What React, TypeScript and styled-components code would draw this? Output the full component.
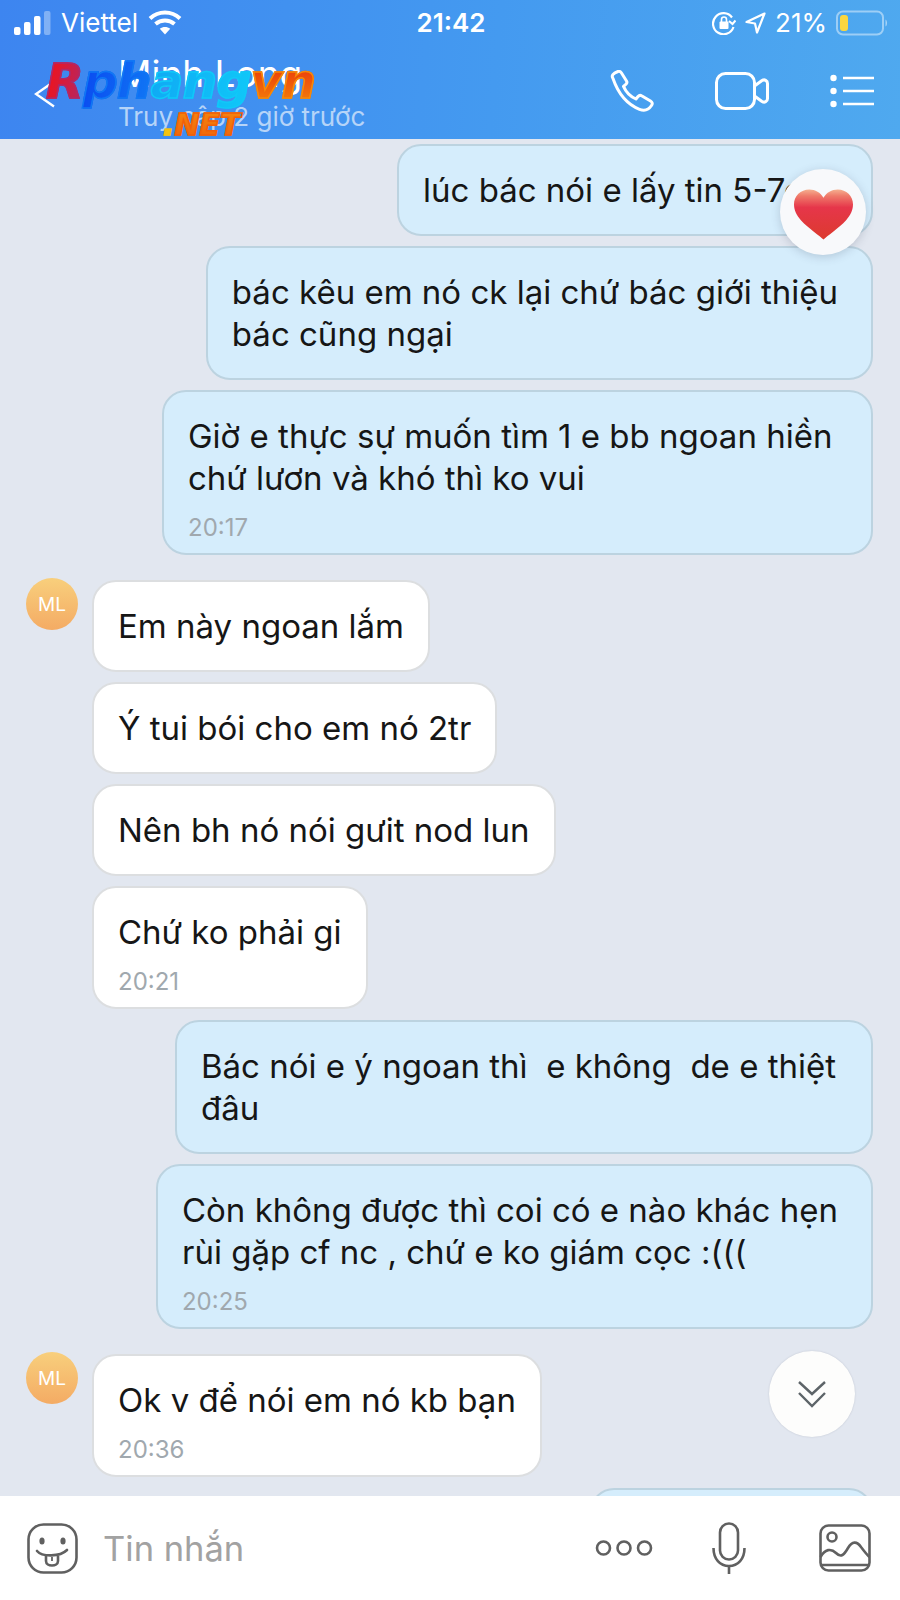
import styled, { createGlobalStyle } from "styled-components";

const GlobalStyle = createGlobalStyle`
  html, body {
    margin: 0;
    padding: 0;
    background: #e2e7f0;
  }
  * {
    box-sizing: border-box;
  }
`;

const Screen = styled.div`
  position: relative;
  display: flex;
  flex-direction: column;
  width: 900px;
  height: 1600px;
  overflow: hidden;
  font-family: Inter, "Noto Sans", sans-serif;
  color: #161616;
`;

const TopBar = styled.header`
  flex: none;
  height: 139px;
  color: #fff;
  background: linear-gradient(95deg, #3d85f0 0%, #449af0 55%, #4fa9ef 100%);
`;

const StatusBar = styled.div`
  display: grid;
  grid-template-columns: 1fr auto 1fr;
  align-items: center;
  height: 45px;
  padding: 0 12px 0 14px;
`;

const StatusSide = styled.div<{ $end?: boolean }>`
  display: flex;
  align-items: center;
  justify-content: ${(p) => (p.$end ? "flex-end" : "flex-start")};
  gap: ${(p) => (p.$end ? "9px" : "10px")};
  font-size: 26px;
`;

const Clock = styled.div`
  font-size: 26px;
  font-weight: 600;
`;

const NavBar = styled.div`
  display: flex;
  align-items: center;
  height: 94px;
  padding: 0 26px 2px 34px;
`;

const BackIcon = styled.svg`
  flex: none;
  width: 22px;
  height: 28px;
  margin-top: 6px;
`;

const Contact = styled.div`
  flex: 1;
  margin: 5px 0 0 62px;
`;

const ContactName = styled.div`
  margin-bottom: 6px;
  font-size: 37px;
  line-height: 40px;
`;

const LastSeen = styled.div`
  font-size: 26px;
  line-height: 34px;
  color: #b6d4f8;
`;

const NavActions = styled.div`
  display: flex;
  align-items: center;
  gap: 61px;
`;

const Messages = styled.main`
  flex: 1;
  min-height: 0;
  overflow: hidden;
  display: flex;
  flex-direction: column;
  padding: 5px 27px 0 26px;
`;

const OutGroup = styled.div`
  display: flex;
  flex-direction: column;
  align-items: flex-end;
  gap: 10px;
  margin-bottom: 25px;

  &:last-child {
    margin-bottom: 0;
  }
`;

const InGroup = styled.div`
  display: flex;
  gap: 14px;
  margin-bottom: 11px;
`;

const Avatar = styled.div`
  flex: none;
  display: flex;
  align-items: center;
  justify-content: center;
  width: 52px;
  height: 52px;
  margin-top: -2px;
  border-radius: 50%;
  font-size: 19px;
  color: #fff;
  background: linear-gradient(180deg, #f8cf7c 0%, #f4ab64 100%);
`;

const InStack = styled.div`
  display: flex;
  flex-direction: column;
  align-items: flex-start;
  gap: 10px;
`;

const Bubble = styled.div<{ $out?: boolean; $minWidth?: number }>`
  min-width: ${(p) => p.$minWidth ?? 0}px;
  min-height: 92px;
  padding: 23px ${(p) => (p.$out ? "33px" : "24px")} 23px 24px;
  border-radius: 24px;
  border: 2px solid ${(p) => (p.$out ? "#bcd3e0" : "#dcdee0")};
  background: ${(p) => (p.$out ? "#d5edfc" : "#ffffff")};
  font-size: 33px;
  line-height: 42px;
  white-space: pre;
`;

const Time = styled.div`
  margin-top: 17px;
  margin-bottom: -10px;
  font-size: 24px;
  line-height: 24px;
  color: #a0a8ae;
`;

const Composer = styled.footer`
  flex: none;
  display: flex;
  align-items: center;
  height: 104px;
  padding: 0 29px 0 27px;
  background: #fff;
`;

const Placeholder = styled.div`
  flex: 1;
  margin-left: 25px;
  font-size: 34.500px;
  color: #a2a2a2;
`;

const ComposerActions = styled.div`
  display: flex;
  align-items: center;
`;

const ReactionBadge = styled.div`
  position: absolute;
  top: 169px;
  left: 780px;
  display: flex;
  align-items: center;
  justify-content: center;
  width: 86px;
  height: 86px;
  padding-top: 4px;
  border-radius: 50%;
  background: #f8f9fb;
  box-shadow: 0 2px 10px rgba(60, 70, 90, 0.22);
`;

const ScrollButton = styled.div`
  position: absolute;
  top: 1351px;
  left: 769px;
  display: flex;
  align-items: center;
  justify-content: center;
  width: 86px;
  height: 86px;
  border-radius: 50%;
  background: #fdfdfc;
  box-shadow: 0 0 2px rgba(60, 70, 90, 0.2);
`;

const Watermark = styled.div`
  position: absolute;
  top: 57px;
  left: 46px;
  font-family: "DejaVu Sans", Verdana, sans-serif;
  font-weight: 700;
  font-style: italic;
  line-height: 1;
  white-space: nowrap;
`;

const MarkLine = styled.div`
  font-size: 48px;
  letter-spacing: -1px;
  transform: scaleX(1.02);
  transform-origin: left center;
`;

const MarkPart = styled.span<{ $from: string; $to: string; $angle?: number }>`
  background: linear-gradient(${(p) => p.$angle ?? 180}deg, ${(p) => p.$from}, ${(p) => p.$to});
  -webkit-background-clip: text;
  background-clip: text;
  color: transparent;
  -webkit-text-stroke: 1.500px ${(p) => p.$to};
`;

const MarkNet = styled.div`
  margin: 5px 0 0 117px;
  font-size: 30px;
`;

const SignalIcon = () => (
  <svg width="37" height="24" viewBox="0 0 37 24">
    <rect x="0" y="16" width="6.500" height="8" rx="2" fill="#fff" />
    <rect x="10" y="11" width="6.500" height="13" rx="2" fill="#fff" />
    <rect x="20" y="5" width="6.500" height="19" rx="2" fill="#fff" />
    <rect x="30" y="0" width="6.500" height="24" rx="2" fill="#fff" fillOpacity="0.35" />
  </svg>
);

const WifiIcon = () => (
  <svg width="34" height="25" viewBox="0 0 34 25" fill="none" stroke="#fff" strokeWidth="4">
    <path d="M2 8.500C10.500 0.500 23.500 0.500 32 8.500" />
    <path d="M7.500 14C13 9.300 21 9.300 26.500 14" />
    <path d="M17 24.500L11.800 18.800C14.800 16.500 19.200 16.500 22.200 18.800Z" fill="#fff" stroke="none" />
  </svg>
);

const RotationLockIcon = () => (
  <svg width="24" height="24" viewBox="0 0 24 24" fill="none" stroke="#fff" strokeWidth="2.200">
    <path d="M20 6.500A10.500 10.500 0 1 0 21.500 16" />
    <path d="M23.500 9.500L20.500 13L17 10" strokeWidth="2" />
    <rect x="7.500" y="10.500" width="9" height="7.500" rx="1" fill="#fff" stroke="none" />
    <path d="M9.500 11V8.500a2.500 2.500 0 0 1 5 0V11" strokeWidth="1.600" />
  </svg>
);

const LocationIcon = () => (
  <svg width="21" height="22" viewBox="0 0 21 22" fill="none" stroke="#fff" strokeWidth="2.200" strokeLinejoin="round">
    <path d="M19.500 1.500L1.500 10L10 11.500L12 20.500Z" />
  </svg>
);

const BatteryIcon = () => (
  <svg width="52" height="26" viewBox="0 0 52 26" fill="none">
    <rect x="1" y="1.500" width="46" height="23" rx="6" stroke="#fff" strokeOpacity="0.45" strokeWidth="2" />
    <rect x="4" y="5" width="8" height="16" rx="3" fill="#fbd63e" />
    <path d="M49.500 9.500C51.500 10.500 51.500 15.500 49.500 16.500Z" fill="#fff" fillOpacity="0.5" />
  </svg>
);

const PhoneIcon = () => (
  <svg width="44" height="42" viewBox="0 0 44 42" fill="none" stroke="#fff" strokeWidth="3" strokeLinejoin="round">
    <path d="M3 8.500C1 5.500 3 3.500 8 1.500C9.500 1 10.500 1.500 11.500 3L16.500 11C17.300 12.300 17 13.300 15.800 14.300L13.500 16.300C15.500 21 20.500 26.500 26 29L28 26.500C29.200 25.200 30.300 25 31.600 25.800L40.500 31C42.500 32.300 42.700 33.700 41.500 35.500C38.500 40 34 41 29.500 39.300C17.500 34.500 8.500 24.500 3 8.500Z" />
  </svg>
);

const VideoIcon = () => (
  <svg width="54" height="38" viewBox="0 0 54 38" fill="none" stroke="#fff" strokeWidth="3" strokeLinejoin="round">
    <rect x="1.500" y="1.500" width="38" height="35" rx="9" />
    <path d="M39.500 14L47 8.500C49.500 7 52.500 8.500 52.500 11.500V26.500C52.500 29.500 49.500 31 47 29.500L39.500 24" />
  </svg>
);

const ListIcon = () => (
  <svg width="44" height="34" viewBox="0 0 44 34" fill="none">
    <circle cx="3.500" cy="4" r="3.200" fill="#fff" />
    <circle cx="3.500" cy="17" r="3.200" fill="#fff" />
    <circle cx="3.500" cy="30" r="3.200" fill="#fff" />
    <path d="M13 4H44M13 17H44M13 30H44" stroke="#fff" strokeWidth="2.600" />
  </svg>
);

const HeartIcon = () => (
  <svg width="59" height="51" viewBox="0 0 58 52" preserveAspectRatio="none">
    <defs>
      <linearGradient id="heartFill" x1="0" y1="0" x2="0" y2="1">
        <stop offset="0" stopColor="#f5b090" />
        <stop offset="0.13" stopColor="#ef7a6a" />
        <stop offset="0.36" stopColor="#e6364a" />
        <stop offset="1" stopColor="#dc3a2e" />
      </linearGradient>
    </defs>
    <path
      d="M29 51.500C26 48 14 40 7 32C2 26 0 21 0 15.500C0 7 6.500 0.500 15 0.500C21 0.500 26 3.500 29 9C32 3.500 37 0.500 43 0.500C51.500 0.500 58 7 58 15.500C58 21 56 26 51 32C44 40 32 48 29 51.500Z"
      fill="url(#heartFill)"
    />
  </svg>
);

const ChevronsIcon = () => (
  <svg width="30" height="28" viewBox="0 0 30 28" fill="none" stroke="#5d6468" strokeWidth="2.400">
    <path d="M2 2L15 14L28 2" />
    <path d="M2 13L15 26L28 13" />
  </svg>
);

const FaceIcon = () => (
  <svg width="51" height="51" viewBox="0 0 51 51" fill="none" stroke="#606060" strokeWidth="2.600">
    <rect x="1.500" y="1.500" width="48" height="48" rx="15" />
    <ellipse cx="15" cy="18" rx="2.600" ry="3.600" fill="#606060" stroke="none" />
    <ellipse cx="36" cy="18" rx="2.600" ry="3.600" fill="#606060" stroke="none" />
    <path d="M10 28C15 34 33 34 40 27" strokeLinecap="round" />
    <path d="M19 33V38C19 44 31 44 31 38V32.500" />
    <path d="M25 34V38" strokeWidth="1.800" />
  </svg>
);

const DotsIcon = styled.svg`
  margin-right: 59px;
`;

const MicIcon = styled.svg`
  margin-right: 73px;
`;

const ImageIcon = () => (
  <svg width="52" height="48" viewBox="0 0 52 48" fill="none" stroke="#606060" strokeWidth="2.600">
    <rect x="1.500" y="1.500" width="49" height="45" rx="8" />
    <circle cx="13" cy="13" r="4.500" />
    <path d="M1.500 33C6 25 12 24 17 29C22 34 25 31 29 24C33 17 38 17 42 23C45 27 48 31 50.500 33" />
    <path d="M2 41H50" />
  </svg>
);

function App() {
  return (
    <>
      <GlobalStyle />
      <Screen>
        <TopBar>
          <StatusBar>
            <StatusSide>
              <SignalIcon />
              <span>Viettel</span>
              <WifiIcon />
            </StatusSide>
            <Clock>21:42</Clock>
            <StatusSide $end>
              <RotationLockIcon />
              <LocationIcon />
              <span>21%</span>
              <BatteryIcon />
            </StatusSide>
          </StatusBar>
          <NavBar>
            <BackIcon viewBox="0 0 22 28" fill="none" stroke="#fff" strokeWidth="2.400">
              <path d="M20 1.500L2 14L20 26.500" />
            </BackIcon>
            <Contact>
              <ContactName>Minh Long</ContactName>
              <LastSeen>Truy cập 2 giờ trước</LastSeen>
            </Contact>
            <NavActions>
              <PhoneIcon />
              <VideoIcon />
              <ListIcon />
            </NavActions>
          </NavBar>
        </TopBar>

        <Messages>
          <OutGroup>
            <Bubble $out $minWidth={476}>lúc bác nói e lấy tin 5-7củ</Bubble>
            <Bubble $out>{"bác kêu em nó ck lại chứ bác giới thiệu\nbác cũng ngại"}</Bubble>
            <Bubble $out $minWidth={711}>
              {"Giờ e thực sự muốn tìm 1 e bb ngoan hiền\nchứ lươn và khó thì ko vui"}
              <Time>20:17</Time>
            </Bubble>
          </OutGroup>
          <InGroup>
            <Avatar>ML</Avatar>
            <InStack>
              <Bubble>Em này ngoan lắm</Bubble>
              <Bubble>Ý tui bói cho em nó 2tr</Bubble>
              <Bubble>Nên bh nó nói gưit nod lun</Bubble>
              <Bubble>
                Chứ ko phải gi
                <Time>20:21</Time>
              </Bubble>
            </InStack>
          </InGroup>
          <OutGroup>
            <Bubble $out $minWidth={698}>{"Bác nói e ý ngoan thì  e không  de e thiệt\nđâu"}</Bubble>
            <Bubble $out>
              {"Còn không được thì coi có e nào khác hẹn\nrùi gặp cf nc , chứ e ko giám cọc :((("}
              <Time>20:25</Time>
            </Bubble>
          </OutGroup>
          <InGroup>
            <Avatar>ML</Avatar>
            <InStack>
              <Bubble>
                Ok v để nói em nó kb bạn
                <Time>20:36</Time>
              </Bubble>
            </InStack>
          </InGroup>
          <OutGroup>
            <Bubble $out $minWidth={283} />
          </OutGroup>
        </Messages>

        <Composer>
          <FaceIcon />
          <Placeholder>Tin nhắn</Placeholder>
          <ComposerActions>
            <DotsIcon width="58" height="18" viewBox="0 0 58 18" fill="none" stroke="#606060" strokeWidth="2.600">
              <circle cx="8.500" cy="9" r="6.500" />
              <circle cx="29" cy="9" r="6.500" />
              <circle cx="49.500" cy="9" r="6.500" />
            </DotsIcon>
            <MicIcon width="34" height="52" viewBox="0 0 34 52" fill="none" stroke="#606060" strokeWidth="2.600">
              <rect x="8" y="1.500" width="18" height="36" rx="9" />
              <path d="M1.500 26C1.500 37 8 44 17 44C26 44 32.500 37 32.500 26" />
              <path d="M17 44V52" />
            </MicIcon>
            <ImageIcon />
          </ComposerActions>
        </Composer>

        <ReactionBadge>
          <HeartIcon />
        </ReactionBadge>
        <ScrollButton>
          <ChevronsIcon />
        </ScrollButton>

        <Watermark>
          <MarkLine>
            <MarkPart $from="#f81010" $to="#b02868" $angle={100}>R</MarkPart>
            <MarkPart $from="#0a48f0" $to="#1078f5" $angle={100}>ph</MarkPart>
            <MarkPart $from="#10a8f4" $to="#10c8f8" $angle={100}>ang</MarkPart>
            <MarkPart $from="#e8200a" $to="#f58a0a">vn</MarkPart>
          </MarkLine>
          <MarkNet>
            <MarkPart $from="#f4d010" $to="#f4c010">.</MarkPart>
            <MarkPart $from="#f58a10" $to="#f0600a">NET</MarkPart>
          </MarkNet>
        </Watermark>
      </Screen>
    </>
  );
}

export default App;
